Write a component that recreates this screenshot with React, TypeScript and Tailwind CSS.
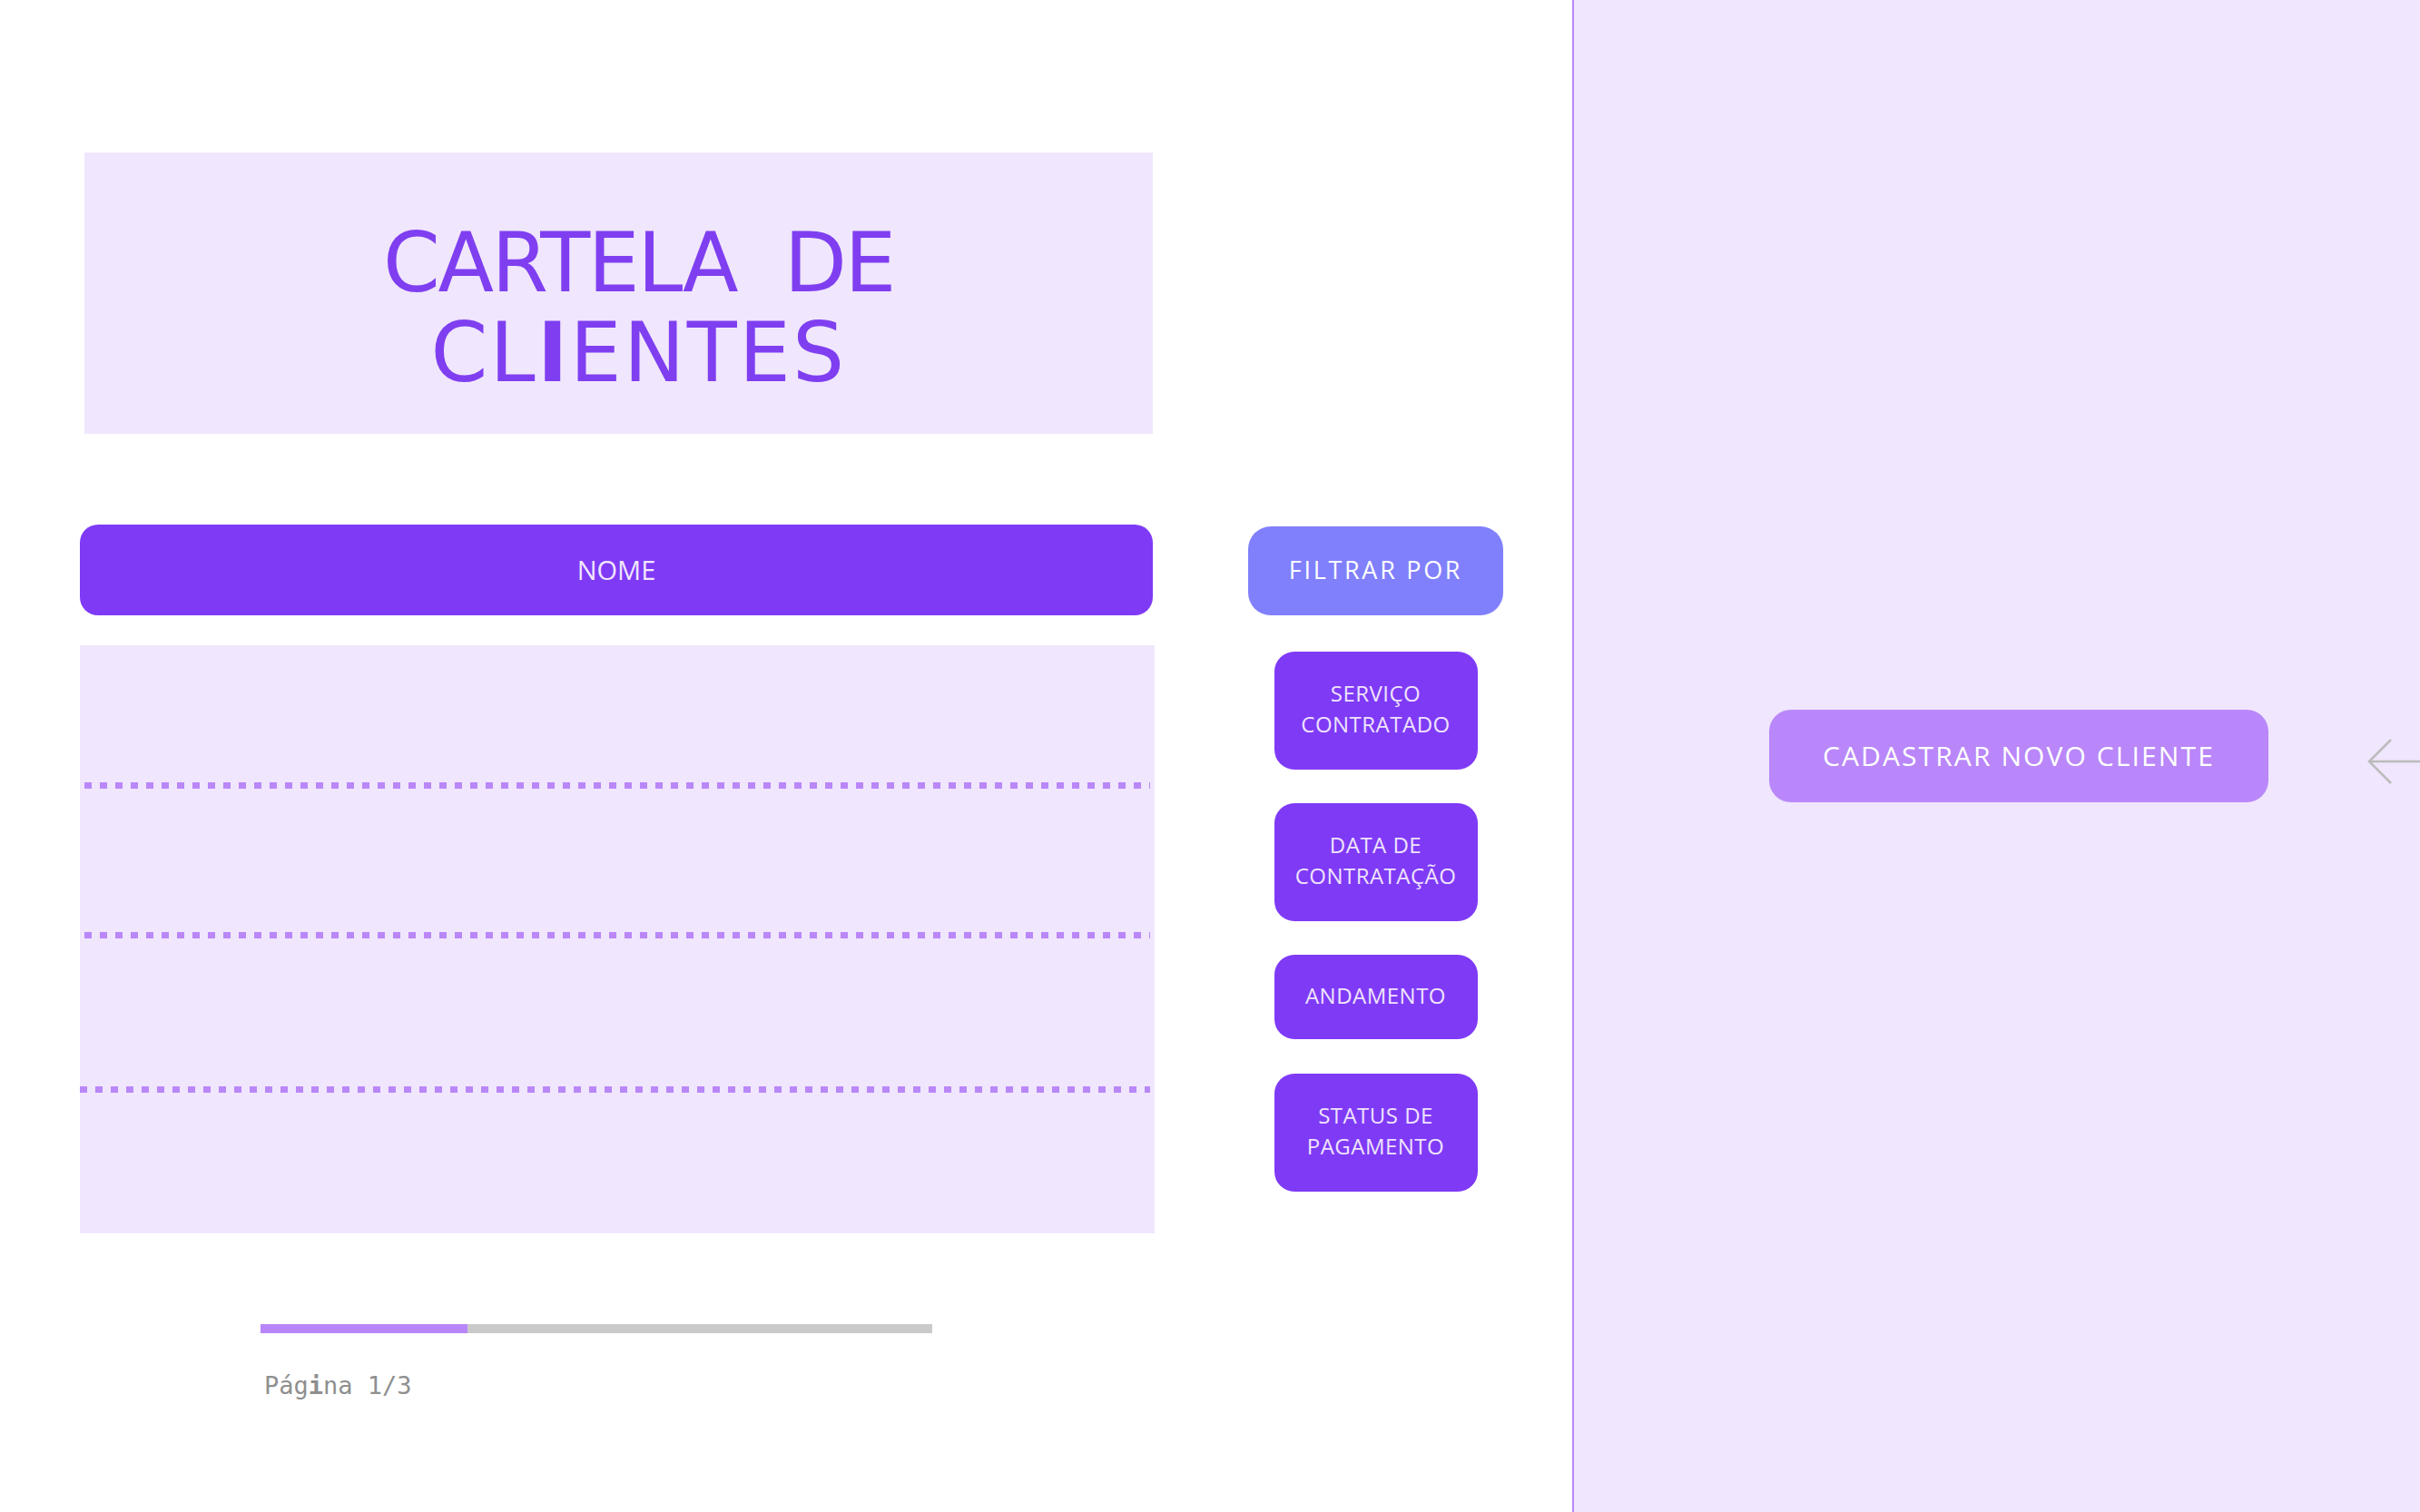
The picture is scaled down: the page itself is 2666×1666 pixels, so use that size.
import React from "react"

const filtros = [
    { linhas: ["SERVIÇO", "CONTRATADO"], h: "h-[130px]", mt: "mt-[40px]" },
    { linhas: ["DATA DE", "CONTRATAÇÃO"], h: "h-[130px]", mt: "mt-[37px]" },
    { linhas: ["ANDAMENTO"], h: "h-[93px]", mt: "mt-[37px]" },
    { linhas: ["STATUS DE", "PAGAMENTO"], h: "h-[130px]", mt: "mt-[38px]" },
]

const Pontilhado = ({ className }: { className: string }) => (
    <div className={`h-[7px] bg-[repeating-linear-gradient(90deg,#b987f8_0px,#b987f8_8px,transparent_8px,transparent_17px)] ${className}`} />
)

const App = () => {
    return (
        <div className="flex h-[1666px] w-[2666px] overflow-hidden bg-white font-['Open_Sans',sans-serif]">
            {/* lado esquerdo: cartela */}
            <div className="w-[1732px] shrink-0 pl-[88px] pt-[168px]">
                <div className="ml-[5px] h-[310px] w-[1177px] bg-[#f0e6fd] pl-[44px] pt-[72px] text-center font-['DejaVu_Sans',sans-serif] text-[90px] leading-[99px] text-[#7f3ff0]">
                    <div className="whitespace-pre tracking-[-2.4px]">CARTELA  DE</div>
                    <div className="tracking-[2.3px]">
                        CL<span className="font-bold">I</span>ENTES
                    </div>
                </div>

                <div className="mt-[100px] flex items-start">
                    <div className="w-[1184px]">
                        <div className="flex h-[100px] w-[1182px] items-center justify-center rounded-[20px] bg-[#7f3af6] text-[29px] text-[#f0e6fd]">
                            NOME
                        </div>
                        <div className="mt-[33px] flex h-[648px] flex-col bg-[#f0e6fd]">
                            <div className="h-[151px]" />
                            <Pontilhado className="ml-[5px] mr-[5px]" />
                            <div className="h-[158px]" />
                            <Pontilhado className="ml-[5px] mr-[5px]" />
                            <div className="h-[163px]" />
                            <Pontilhado className="mr-[5px]" />
                            <div className="flex-1" />
                        </div>
                    </div>

                    <div className="ml-[103px] flex w-[281px] flex-col items-center">
                        <div className="mt-[2px] flex h-[98px] w-full items-center justify-center rounded-[25px] bg-[#8080fc] pb-[2px] text-[27px] tracking-[0.1em] text-white">
                            FILTRAR POR
                        </div>
                        {filtros.map((f) => (
                            <div
                                key={f.linhas.join(" ")}
                                className={`flex w-[224px] flex-col items-center justify-center rounded-[22px] bg-[#7f3af6] pb-[4px] text-[24px] leading-[34px] tracking-[0.02em] text-[#efe3fd] ${f.h} ${f.mt}`}
                            >
                                {f.linhas.map((l) => (
                                    <div key={l}>{l}</div>
                                ))}
                            </div>
                        ))}
                    </div>
                </div>

                {/* paginação */}
                <div className="ml-[199px] mt-[100px]">
                    <div className="flex h-[10px] w-[740px] bg-[#cacaca]">
                        <div className="h-full w-[228px] bg-[#b986f9]" />
                    </div>
                    <div className="ml-[4px] mt-[42px] font-['DejaVu_Sans_Mono',monospace] text-[27px] leading-[32px] text-[#8f8f8f]">
                        Pág<span className="font-bold">i</span>na 1/3
                    </div>
                </div>
            </div>

            {/* lado direito: cadastro */}
            <div className="flex flex-1 items-start border-l-2 border-[#b987f5] bg-[#f0e6fd] pl-[215px] pt-[782px]">
                <button className="flex h-[102px] w-[550px] shrink-0 items-center justify-center rounded-[24px] bg-[#b987f9] pb-[2px] text-[30px] tracking-[0.07em] text-white">
                    CADASTRAR NOVO CLIENTE
                </button>
                <svg className="ml-[109px] mt-[32px] shrink-0" width="58" height="50" viewBox="0 0 58 50" fill="none">
                    <path d="M26 1 L2 25 L26 49 M2 25 H58" stroke="#bcbcbc" strokeWidth="2.5" />
                </svg>
            </div>
        </div>
    )
}

export default App
